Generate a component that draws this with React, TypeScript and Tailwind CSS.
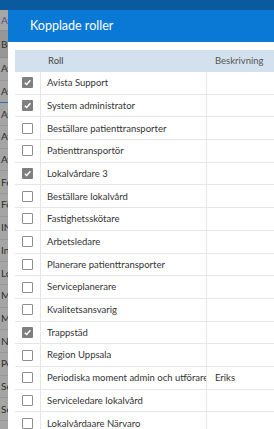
import React from "react";

type Role = { name: string; desc?: string; checked?: boolean };

const roles: Role[] = [
  { name: "Avista Support", checked: true },
  { name: "System administrator", checked: true },
  { name: "Beställare patienttransporter" },
  { name: "Patienttransportör" },
  { name: "Lokalvårdare 3", checked: true },
  { name: "Beställare lokalvård" },
  { name: "Fastighetsskötare" },
  { name: "Arbetsledare" },
  { name: "Planerare patienttransporter" },
  { name: "Serviceplanerare" },
  { name: "Kvalitetsansvarig" },
  { name: "Trappstäd", checked: true },
  { name: "Region Uppsala" },
  { name: "Periodiska moment admin och utförare", desc: "Eriks" },
  { name: "Serviceledare lokalvård" },
  { name: "Lokalvårdaare Närvaro" },
];

const backRows = ["Av", "Av", "Av", "Av", "Av", "Fe", "Fö", "IN", "In", "Lo", "M", "M", "N", "Pe", "Se", "Se"];

function Checkbox({ checked }: { checked?: boolean }) {
  if (checked) {
    return (
      <span className="flex h-[11px] w-[11px] items-center justify-center rounded-[1px] bg-[#7f7f7f]">
        <svg width="9" height="9" viewBox="0 0 10 10" aria-hidden>
          <path d="M2 5.2 L4.1 7.3 L8.2 2.6" fill="none" stroke="white" strokeWidth="1.6" />
        </svg>
      </span>
    );
  }
  return <span className="block h-[11px] w-[11px] rounded-[1px] border border-[#8e8e8e] bg-white" />;
}

export default function App() {
  return (
    <div className="relative h-[429px] w-[274px] overflow-hidden bg-[#a5a5a5] font-['Lato','Open_Sans',sans-serif]">
      {/* page behind the dialog, dimmed */}
      <div className="flex flex-col">
        <div className="h-[10px] bg-[#0b5a9e]" />
        <div className="flex h-[20px] items-center bg-[#a7a7a7] pl-[1px] text-[10px] text-[#5b4c84]">Avista</div>
        <div className="flex h-[28px] items-center border-y border-[#8f8f8f] bg-[#979797] pl-[1px] text-[10px] text-[#333]">
          Beteckning
        </div>
        {backRows.map((t, i) => (
          <div
            key={i}
            className={
              "flex h-[22.7px] items-center border-b pl-[1px] text-[10px] text-[#2d2d2d] " +
              (i === 1 ? "border-[#2f6fb0]" : "border-[#969696]")
            }
          >
            {t}
          </div>
        ))}
      </div>

      {/* dialog */}
      <div className="absolute left-[8px] top-[10px] h-[440px] w-[290px] bg-white">
        <div className="flex h-[32px] items-center bg-[#0a79d6] pl-[22px] text-[12.5px] text-white">Kopplade roller</div>
        <div className="pl-[7px] pt-[8px]">
          <div className="flex h-[22px] items-center bg-[#d3e1ee] pt-[1px] text-[9.5px] text-[#444]">
            <div className="w-[26px]" />
            <div className="w-[166px] pl-[7px]">Roll</div>
            <div className="pl-[8px] text-[#555]">Beskrivning</div>
          </div>
          {roles.map((r) => (
            <div key={r.name} className="flex h-[22.7px] items-stretch border-b border-[#e6e6e6] text-[9.5px] text-[#333]">
              <div className="flex w-[26px] items-center justify-center border-r border-[#e6e6e6] pr-[1px]">
                <Checkbox checked={r.checked} />
              </div>
              <div className="flex w-[166px] items-center overflow-hidden whitespace-nowrap border-r border-[#e6e6e6] pl-[6px] pt-[1px]">
                {r.name}
              </div>
              <div className="flex items-center pl-[8px] pt-[1px]">{r.desc}</div>
            </div>
          ))}
        </div>
      </div>
    </div>
  );
}
